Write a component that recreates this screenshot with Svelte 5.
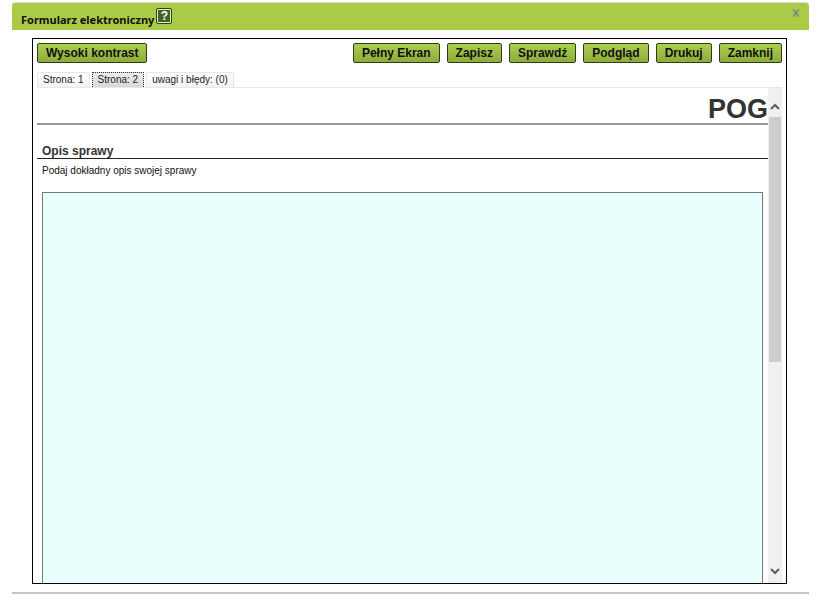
<script>
  const actions = ['Pełny Ekran', 'Zapisz', 'Sprawdź', 'Podgląd', 'Drukuj', 'Zamknij'];
  const tabs = ['Strona: 1', 'Strona: 2', 'uwagi i błędy: (0)'];
  let active = $state(1);
  let description = $state('');
</script>

<section class="dialog" aria-labelledby="dialog-title">
  <header class="titlebar">
    <h1 id="dialog-title">Formularz elektroniczny</h1>
    <button class="help" type="button" aria-label="Pomoc">?</button>
    <button class="close" type="button" aria-label="Zamknij okno">
      <svg width="8" height="8" viewBox="0 0 8 8" aria-hidden="true">
        <path d="M2 1.5L6 6.5M6 1.5L2 6.5" fill="none" stroke="#71898f" stroke-width="1.6" />
        <path d="M.5 1H3M5 1H7.5M.5 7H3M5 7H7.5" fill="none" stroke="#71898f" />
      </svg>
    </button>
  </header>

  <div class="frame">
    <div class="toolbar">
      <button class="action" type="button">Wysoki kontrast</button>
      <div class="actions">
        {#each actions as label}
          <button class="action" type="button">{label}</button>
        {/each}
      </div>
    </div>

    <nav class="tabs">
      {#each tabs as tab, i}
        <button type="button" class="tab" class:active={active === i} onclick={() => (active = i)}>{tab}</button>
      {/each}
    </nav>

    <div class="view">
      <form class="page">
        <h2>POG</h2>
        <h3>Opis sprawy</h3>
        <label for="description">Podaj dokładny opis swojej sprawy</label>
        <textarea id="description" bind:value={description}></textarea>
      </form>
      <div class="scrollbar">
        <button type="button" class="arrow" aria-label="Przewiń w górę">
          <svg width="14" height="10" viewBox="0 0 14 10" aria-hidden="true">
            <path d="M3 7L7 3L11 7" fill="none" stroke="#5c5c5c" stroke-width="2" />
          </svg>
        </button>
        <div class="track"><div class="thumb"></div></div>
        <button type="button" class="arrow" aria-label="Przewiń w dół">
          <svg width="14" height="10" viewBox="0 0 14 10" aria-hidden="true">
            <path d="M3 3L7 7L11 3" fill="none" stroke="#5c5c5c" stroke-width="2" />
          </svg>
        </button>
      </div>
    </div>
  </div>
</section>

<style>
  :global(body) {
    background: #fff;
  }

  .dialog,
  .dialog * {
    box-sizing: border-box;
  }

  .dialog {
    display: flex;
    flex-direction: column;
    height: calc(100vh - 12px);
    margin: 2px 12px 10px;
    border-top: 1px solid #dcdce0;
    border-bottom: 2px solid #c6c6c6;
    border-radius: 3px 3px 0 0;
    font-family: "Liberation Sans", Arial, sans-serif;
    color: #111;
  }

  button {
    font-family: inherit;
    padding: 0;
    cursor: pointer;
  }

  .titlebar {
    display: flex;
    align-items: flex-start;
    flex: none;
    height: 27px;
    padding: 5px 9px 0;
    background: #abca46;
    border-radius: 3px 3px 0 0;
  }

  h1 {
    margin: 4px 2px 0 0;
    font: bold 11px/16px "Noto Sans", "Open Sans", sans-serif;
    color: #111;
  }

  .help {
    width: 16px;
    height: 16px;
    border: 1px solid #2c4414;
    border-radius: 2px;
    background: #41651f;
    box-shadow: inset 0 0 0 1px #e4efd0;
    color: #fff;
    font-size: 12px;
    font-weight: bold;
    line-height: 14px;
  }

  .close {
    display: flex;
    margin: 1px 0 0 auto;
    border: 0;
    background: none;
  }

  .frame {
    display: flex;
    flex-direction: column;
    flex: 1;
    min-height: 0;
    margin: 8px 22px 8px 20px;
    padding: 4px 4px 0;
    border: 1px solid #000;
    overflow: hidden;
  }

  .toolbar,
  .actions {
    display: flex;
    justify-content: space-between;
    gap: 7px;
  }

  .action {
    height: 20px;
    padding: 0 8px;
    border: 1px solid #2f3c14;
    border-radius: 2px;
    background: linear-gradient(#aacf4d, #8dac3d);
    color: #111;
    font-size: 12px;
    font-weight: bold;
    line-height: 16px;
    white-space: nowrap;
  }

  .tabs {
    display: flex;
    gap: 2px;
    margin-top: 9px;
    border-bottom: 1px solid #e8e8e8;
  }

  .tab {
    height: 15px;
    padding: 0 5px;
    border: 1px solid #e6e6e6;
    border-bottom: 0;
    border-radius: 2px 2px 0 0;
    background: linear-gradient(#fff, #f3f3f3);
    color: #222;
    font-size: 10px;
    line-height: 14px;
  }

  .tab.active {
    border: 1px dotted #333;
    border-bottom: 0;
    border-radius: 0;
    background: linear-gradient(#ececec, #d8d8d8);
  }

  .view {
    display: flex;
    flex: 1;
    min-height: 0;
  }

  .page {
    flex: 1;
    min-width: 0;
    overflow: hidden;
  }

  h2 {
    margin: 0 0 20px;
    padding: 8px 0 0;
    border-bottom: 2px solid #999;
    color: #333;
    font-size: 27px;
    line-height: 27px;
    text-align: right;
  }

  h3 {
    margin: 0;
    padding-left: 5px;
    border-bottom: 1px solid #222;
    color: #333;
    font-size: 12px;
    line-height: 13px;
  }

  label {
    display: block;
    padding: 5px 5px 14px;
    font-size: 10px;
    line-height: 14px;
  }

  textarea {
    display: block;
    width: calc(100% - 10px);
    height: 600px;
    margin: 0 5px;
    padding: 4px;
    border: 1px solid #777;
    background: #e9fffe;
    resize: none;
    outline: 0;
    font: 12px/16px "Liberation Sans", Arial, sans-serif;
  }

  .scrollbar {
    display: flex;
    flex-direction: column;
    flex: none;
    width: 14px;
    background: #f0f0f0;
  }

  .arrow {
    display: flex;
    align-items: center;
    justify-content: center;
    height: 29px;
    padding-top: 8px;
    border: 0;
    background: none;
  }

  .arrow:last-child {
    padding-top: 4px;
  }

  .track {
    flex: 1;
    padding: 0 1px;
  }

  .thumb {
    height: 56%;
    background: #cdcdcd;
  }
</style>
